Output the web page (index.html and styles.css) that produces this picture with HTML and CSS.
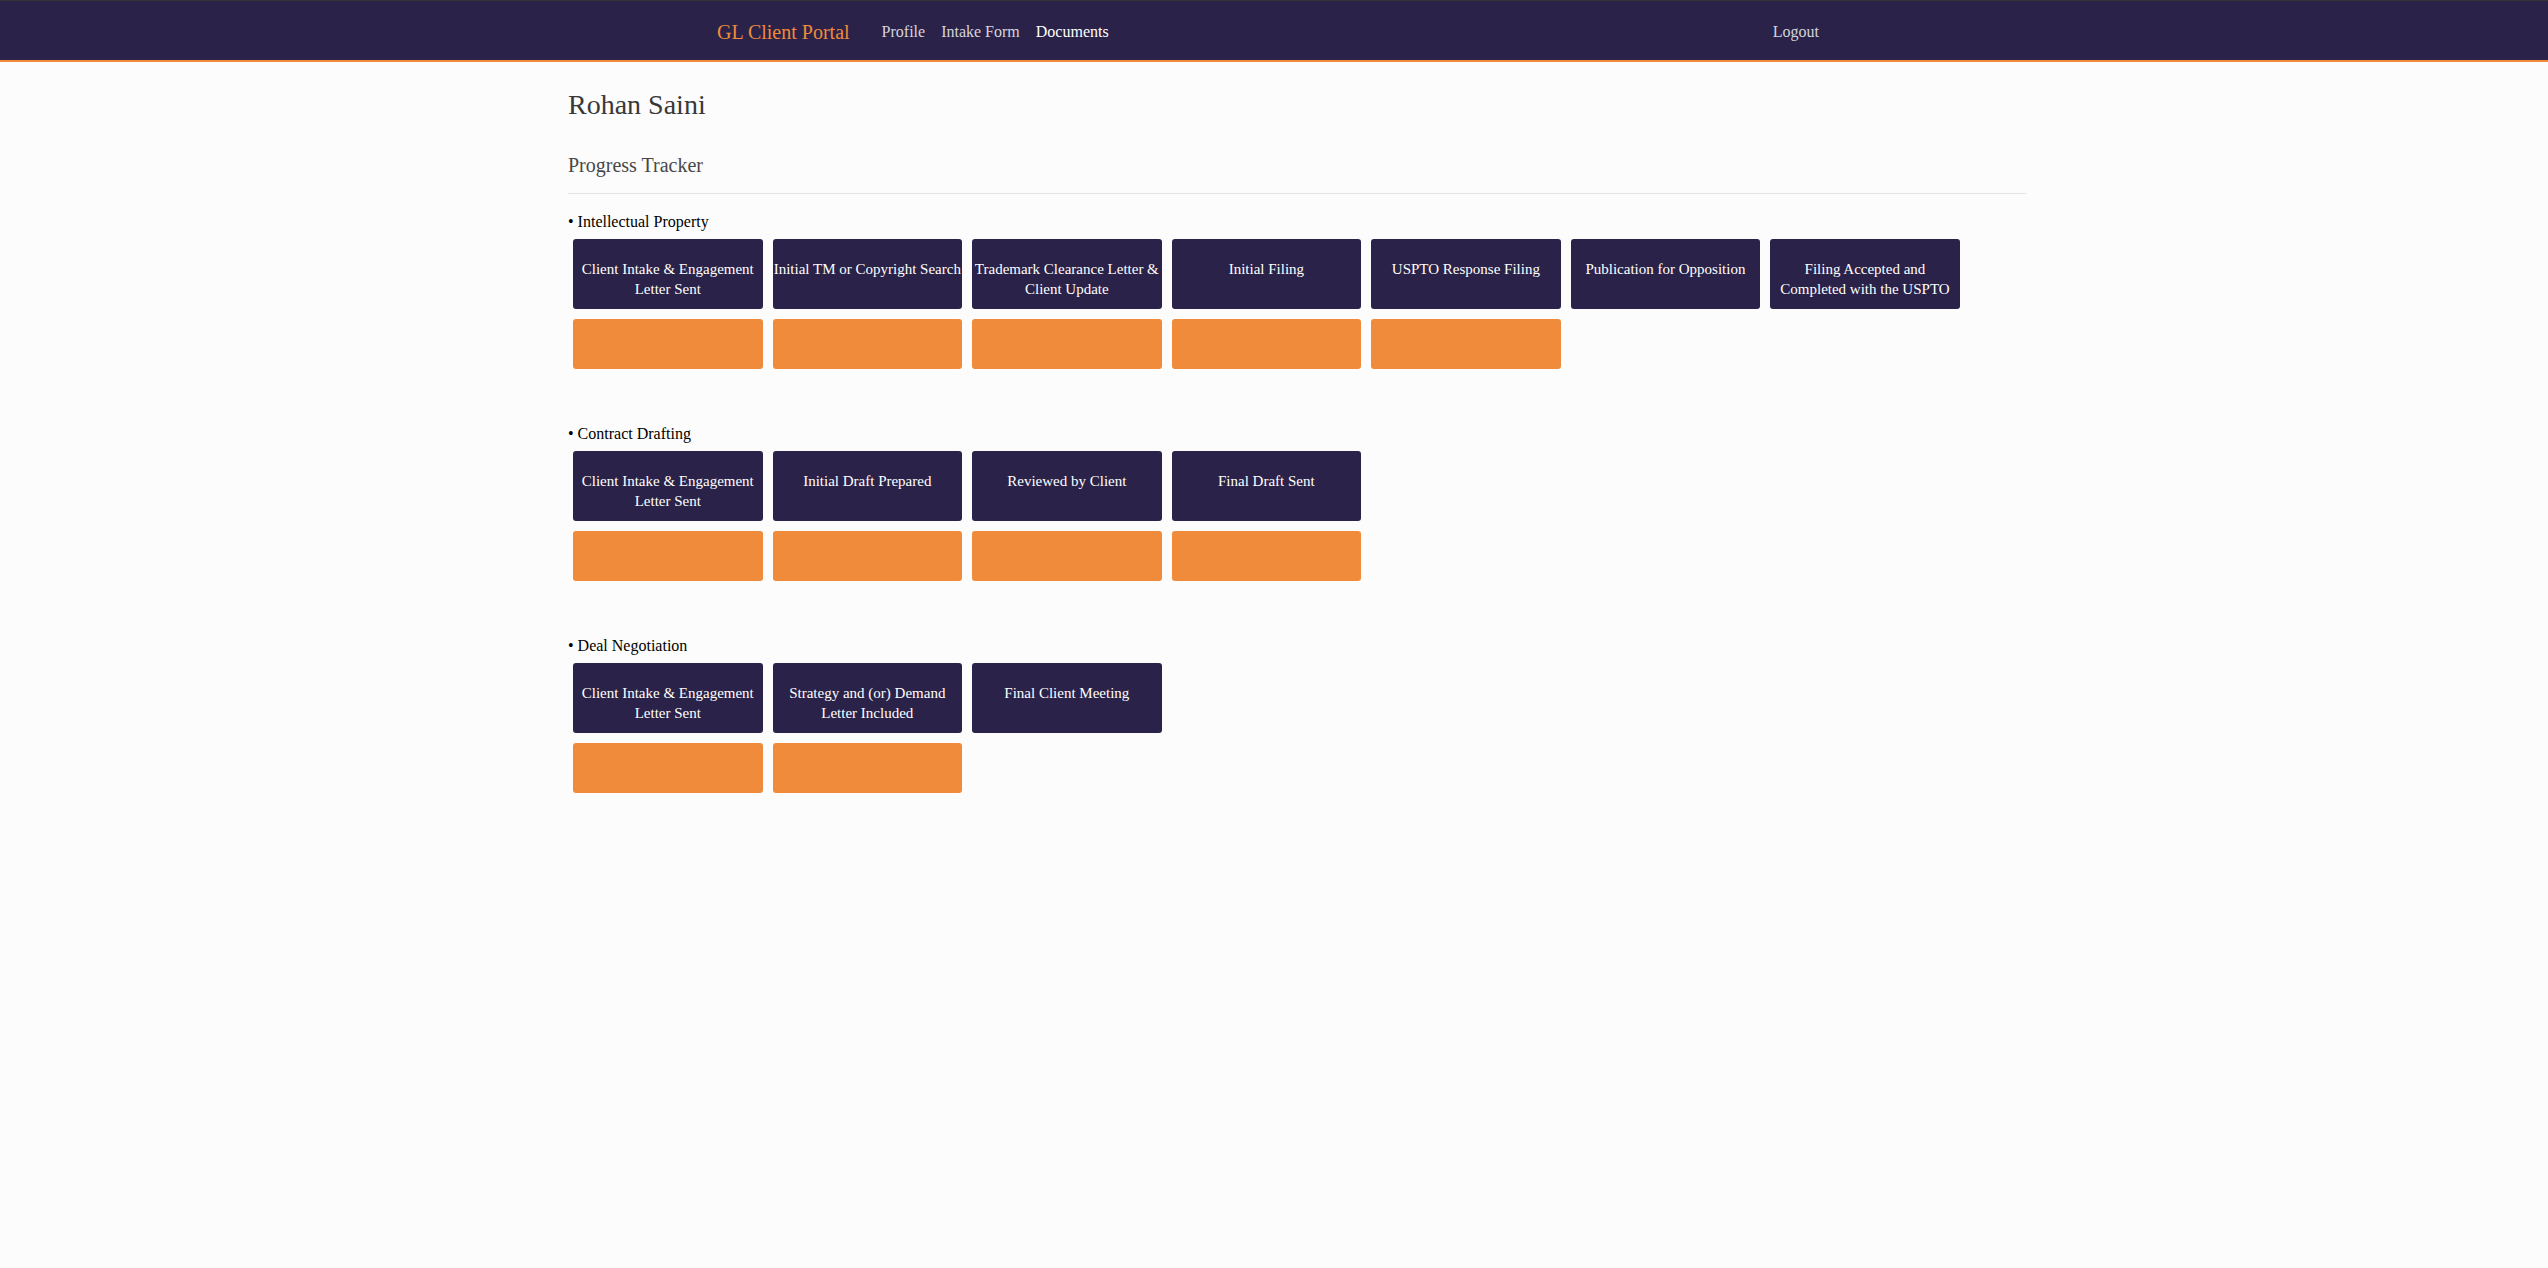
FILE: index.html
```
<!DOCTYPE html>
<html lang="en">
<head>
<meta charset="utf-8">
<title>GL Client Portal</title>
<link rel="stylesheet" href="styles.css">
</head>
<body>
<nav class="navbar">
  <div class="nav-inner">
    <a class="brand" href="#">GL Client Portal</a>
    <a class="nav-link" href="#">Profile</a>
    <a class="nav-link" href="#">Intake Form</a>
    <a class="nav-link active" href="#">Documents</a>
    <span class="spacer"></span>
    <a class="nav-link logout" href="#">Logout</a>
  </div>
</nav>
<main class="main">
  <h3 class="name">Rohan Saini</h3>
  <h5 class="subtitle">Progress Tracker</h5>
  <hr class="rule">

  <section class="track">
    <div class="track-label">• Intellectual Property</div>
    <div class="steps">
      <div class="step">Client Intake &amp; Engagement Letter Sent</div>
      <div class="step">Initial TM or Copyright Search</div>
      <div class="step">Trademark Clearance Letter &amp; Client Update</div>
      <div class="step">Initial Filing</div>
      <div class="step">USPTO Response Filing</div>
      <div class="step">Publication for Opposition</div>
      <div class="step">Filing Accepted and Completed with the USPTO</div>
    </div>
    <div class="steps">
      <div class="done"></div>
      <div class="done"></div>
      <div class="done"></div>
      <div class="done"></div>
      <div class="done"></div>
    </div>
  </section>

  <section class="track">
    <div class="track-label">• Contract Drafting</div>
    <div class="steps">
      <div class="step">Client Intake &amp; Engagement Letter Sent</div>
      <div class="step">Initial Draft Prepared</div>
      <div class="step">Reviewed by Client</div>
      <div class="step">Final Draft Sent</div>
    </div>
    <div class="steps">
      <div class="done"></div>
      <div class="done"></div>
      <div class="done"></div>
      <div class="done"></div>
    </div>
  </section>

  <section class="track">
    <div class="track-label">• Deal Negotiation</div>
    <div class="steps">
      <div class="step">Client Intake &amp; Engagement Letter Sent</div>
      <div class="step">Strategy and (or) Demand Letter Included</div>
      <div class="step">Final Client Meeting</div>
    </div>
    <div class="steps">
      <div class="done"></div>
      <div class="done"></div>
    </div>
  </section>
</main>
</body>
</html>
```
FILE: styles.css
```
* { box-sizing: border-box; }

html, body {
  margin: 0;
  padding: 0;
}

body {
  background: #fcfcfc;
  font-family: "Liberation Serif", "Times New Roman", serif;
  font-size: 16px;
  line-height: 1.5;
  color: #000;
}

.navbar {
  background: #2a2248;
  border-top: 1px solid #333333;
  border-bottom: 2px solid #ef8b3a;
  height: 62px;
}

.nav-inner {
  width: 1140px;
  margin: 0 auto;
  padding: 2px 17px 0 13px;
  height: 100%;
  display: flex;
  align-items: center;
}

.brand {
  font-size: 20px;
  line-height: 30px;
  color: #ef8b3a;
  text-decoration: none;
  margin-right: 24px;
}

.nav-link {
  font-size: 16px;
  line-height: 24px;
  padding: 0 8px;
  color: rgba(255, 255, 255, 0.82);
  text-decoration: none;
}

.nav-link.active {
  color: #ffffff;
}

.spacer {
  flex: 1;
}

.main {
  width: 1458px;
  margin-left: 568px;
  padding-top: 26px;
}

.name {
  margin: 0;
  font-size: 28px;
  line-height: 1.2;
  font-weight: normal;
  color: #383838;
}

.subtitle {
  margin: 31px 0 0;
  font-size: 20px;
  line-height: 1.2;
  font-weight: normal;
  color: #484848;
}

.rule {
  margin: 16px 0;
  border: 0;
  border-top: 1px solid #e3e3e3;
  height: 0;
}

.track {
  margin-bottom: 48px;
}

.track-label {
  font-size: 16px;
  line-height: 24px;
  color: #000;
}

.steps {
  display: flex;
}

.step {
  width: 13%;
  height: 70px;
  margin: 5px;
  padding-top: 20px;
  background: #2a2248;
  color: #ffffff;
  border-radius: 3px;
  text-align: center;
  font-size: 15px;
  line-height: 20px;
}

.done {
  width: 13%;
  height: 50px;
  margin: 5px;
  background: #ef8b3a;
  border-radius: 3px;
}
```
